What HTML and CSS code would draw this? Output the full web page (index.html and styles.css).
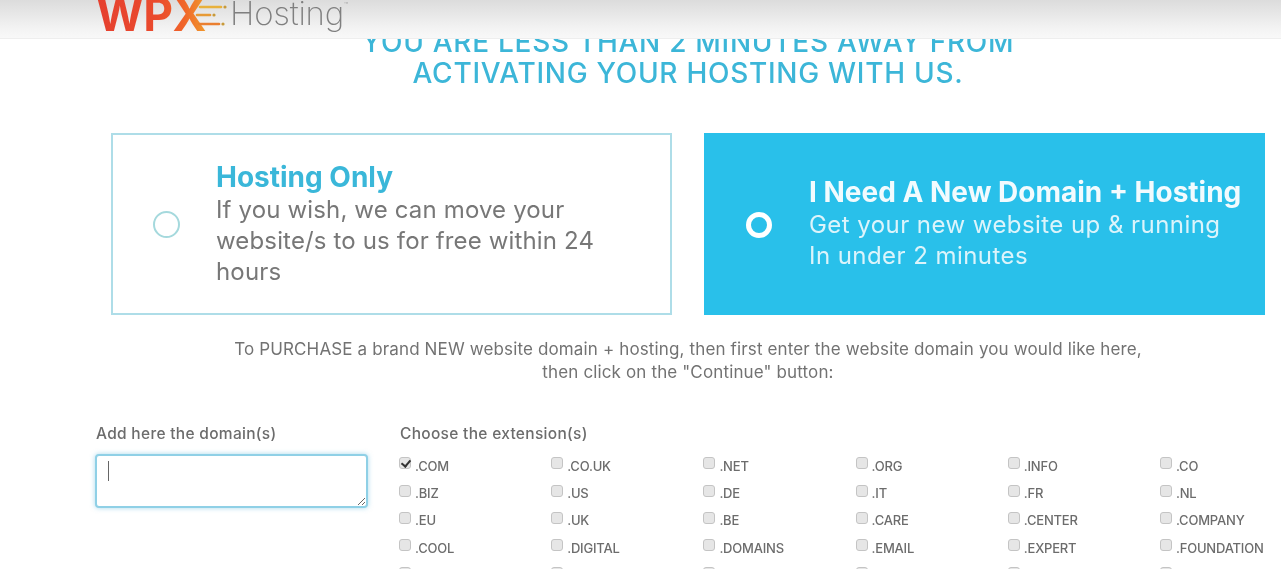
FILE: index.html
```html
<!DOCTYPE html>
<html lang="en">
<head>
<meta charset="utf-8">
<title>WPX Hosting</title>
<link rel="stylesheet" href="styles.css">
</head>
<body>
<header class="topbar">
  <div class="logo">
    <span class="logo-wpx">WPX</span>
    <svg class="logo-lines" width="30" height="30" viewBox="0 0 30 30" aria-hidden="true">
      <g fill="none" stroke-width="2.6" stroke-linecap="round">
        <path d="M0 7 L21 7" stroke="#e8b13c"/>
        <path d="M-3 15 L10 15" stroke="#e79a35"/>
        <path d="M-1 24 L19 24" stroke="#ea7f30"/>
      </g>
      <g fill="#c89a3a"><circle cx="25" cy="7" r="1.6"/><circle cx="14" cy="15" r="1.6"/><circle cx="23" cy="24" r="1.6"/></g>
    </svg>
    <span class="logo-hosting">Hosting</span><span class="logo-tm">™</span>
  </div>
</header>
<main class="page">
  <h1 class="headline">You are less than 2 minutes away from<br>activating your hosting with us.</h1>
  <section class="plans">
    <div class="plan plan-light">
      <span class="radio"></span>
      <div class="plan-text">
        <h2>Hosting Only</h2>
        <p>If you wish, we can move your website/s to us for free within 24 hours</p>
      </div>
    </div>
    <div class="plan plan-active">
      <span class="radio"></span>
      <div class="plan-text">
        <h2>I Need A New Domain + Hosting</h2>
        <p>Get your new website up &amp; running<br>In under 2 minutes</p>
      </div>
    </div>
  </section>
  <p class="intro">To PURCHASE a brand NEW website domain + hosting, then first enter the website domain you would like here,<br>then click on the "Continue" button:</p>
  <section class="order">
    <div class="domain-col">
      <label class="label" for="domains">Add here the domain(s)</label>
      <div class="domains-wrap">
        <textarea id="domains" class="domains"></textarea>
        <span class="caret"></span>
      </div>
    </div>
    <div class="ext-col">
      <div class="label ext-label">Choose the extension(s)</div>
      <div class="ext-grid">
        <label class="ext"><input type="checkbox" checked>.COM</label>
        <label class="ext"><input type="checkbox">.CO.UK</label>
        <label class="ext"><input type="checkbox">.NET</label>
        <label class="ext"><input type="checkbox">.ORG</label>
        <label class="ext"><input type="checkbox">.INFO</label>
        <label class="ext"><input type="checkbox">.CO</label>
        <label class="ext"><input type="checkbox">.BIZ</label>
        <label class="ext"><input type="checkbox">.US</label>
        <label class="ext"><input type="checkbox">.DE</label>
        <label class="ext"><input type="checkbox">.IT</label>
        <label class="ext"><input type="checkbox">.FR</label>
        <label class="ext"><input type="checkbox">.NL</label>
        <label class="ext"><input type="checkbox">.EU</label>
        <label class="ext"><input type="checkbox">.UK</label>
        <label class="ext"><input type="checkbox">.BE</label>
        <label class="ext"><input type="checkbox">.CARE</label>
        <label class="ext"><input type="checkbox">.CENTER</label>
        <label class="ext"><input type="checkbox">.COMPANY</label>
        <label class="ext"><input type="checkbox">.COOL</label>
        <label class="ext"><input type="checkbox">.DIGITAL</label>
        <label class="ext"><input type="checkbox">.DOMAINS</label>
        <label class="ext"><input type="checkbox">.EMAIL</label>
        <label class="ext"><input type="checkbox">.EXPERT</label>
        <label class="ext"><input type="checkbox">.FOUNDATION</label>
        <label class="ext"><input type="checkbox"></label>
        <label class="ext"><input type="checkbox"></label>
        <label class="ext"><input type="checkbox"></label>
        <label class="ext"><input type="checkbox"></label>
        <label class="ext"><input type="checkbox"></label>
        <label class="ext"><input type="checkbox"></label>
      </div>
    </div>
  </section>
</main>
</body>
</html>
```
FILE: styles.css
```css
* { box-sizing: border-box; }
html, body { margin: 0; height: 569px; overflow: hidden; background: #fff; }
body { font-family: Inter, "Open Sans", sans-serif; color: #777; position: relative; }

.topbar {
  position: absolute; top: 0; left: 0; right: 0; height: 39px; z-index: 2; overflow: hidden;
  background: linear-gradient(#dcdcdc, #f3f3f3 75%, #f8f8f8);
  border-bottom: 1px solid #eeeeee;
}
.logo { display: flex; align-items: flex-start; height: 39px; padding-left: 96px; filter: blur(.5px); }
.logo-wpx {
  font: 700 46px/46px Inter, sans-serif; letter-spacing: -.5px; margin-top: -9px;
  background: linear-gradient(90deg, #e5402f, #ea4a2d 55%, #f0652a 80%, #f19a2c);
  -webkit-background-clip: text; background-clip: text; color: transparent;
}
.logo-lines { margin: 0 0 0 -6px; flex: none; overflow: visible; }
.logo-hosting { font: 200 33px/38px Inter, sans-serif; color: #7f7f7f; margin: -6px 0 0 0; letter-spacing: -.2px; }
.logo-tm { font-size: 7px; line-height: 10px; color: #aaa; margin-top: 1px; }

.page { padding: 27px 16px 0 96px; filter: blur(.35px); }
.headline {
  margin: 0 0 0 15px; font-weight: 500; font-size: 28px; line-height: 31px; letter-spacing: .72px;
  text-align: center; text-transform: uppercase; color: #3cb6d8;
}
.plans { display: flex; gap: 32px; margin: 44px 0 0 15px; }
.plan { flex: 0 0 561px; height: 182px; display: flex; align-items: center; }
.plan-light { border: 2px solid #aedde8; padding-left: 40px; }
.plan-active { background: #29c0ea; color: #dcf4fb; padding-left: 42px; }
.radio { flex: none; width: 27px; height: 27px; border-radius: 50%; }
.plan-light .radio { border: 2px solid #a5d9dd; }
.plan-active .radio { border: 5px solid #fff; width: 26px; height: 26px; margin-top: 2px; }
.plan-light .plan-text { margin: 0 0 0 36px; }
.plan-active .plan-text { margin: -1px 0 0 37px; }
.plan h2 { margin: 0 0 2px; font-size: 28px; line-height: 30px; font-weight: 700; }
.plan-light h2 { color: #3ab7d9; }
.plan-active h2 { color: #f2fbfe; }
.plan p { margin: 0; font-size: 24px; line-height: 31px; }
.plan-light p { max-width: 410px; letter-spacing: .15px; }
.plan-active p { letter-spacing: .44px; }

.intro { margin: 23px 0 0 15px; font-size: 17px; line-height: 23px; letter-spacing: .14px; text-align: center; color: #727272; }

.order { display: flex; margin-top: 40px; }
.domain-col { width: 303px; flex: none; }
.label { display: block; font-size: 15.5px; font-weight: 500; line-height: 20px; letter-spacing: .3px; color: #6c6c6c; }
.ext-label { margin-left: 1px; }
.domains-wrap { position: relative; margin: 10px 0 0 -1px; width: 273px; }
.domains {
  display: block; width: 273px; height: 54px; padding: 6px 12px; resize: both;
  border: 2px solid #8fd0e6; border-radius: 4px; outline: none; background: #fff;
  box-shadow: 0 0 5px rgba(80,180,220,.5);
}
.caret { position: absolute; left: 13px; top: 7px; width: 1px; height: 20px; background: #666; }
.ext-col { flex: 1; }
.ext-grid { display: grid; grid-template-columns: repeat(6, 152.2px); grid-auto-rows: 27.4px; margin-top: 8px; }
.ext { display: flex; align-items: center; font-size: 13px; font-weight: 500; color: #6c6c6c; letter-spacing: -.2px; white-space: nowrap; }
.ext input {
  appearance: none; flex: none; position: relative; width: 12px; height: 12px; margin: -5px 4px 0 0;
  background: #e6e6e6; border: 1px solid #c4c4c4; border-radius: 3px;
}
.ext input:checked::after {
  content: ""; position: absolute; left: 3px; top: 0; width: 4px; height: 7px;
  border: solid #333; border-width: 0 2px 2px 0; transform: rotate(40deg);
}
```
